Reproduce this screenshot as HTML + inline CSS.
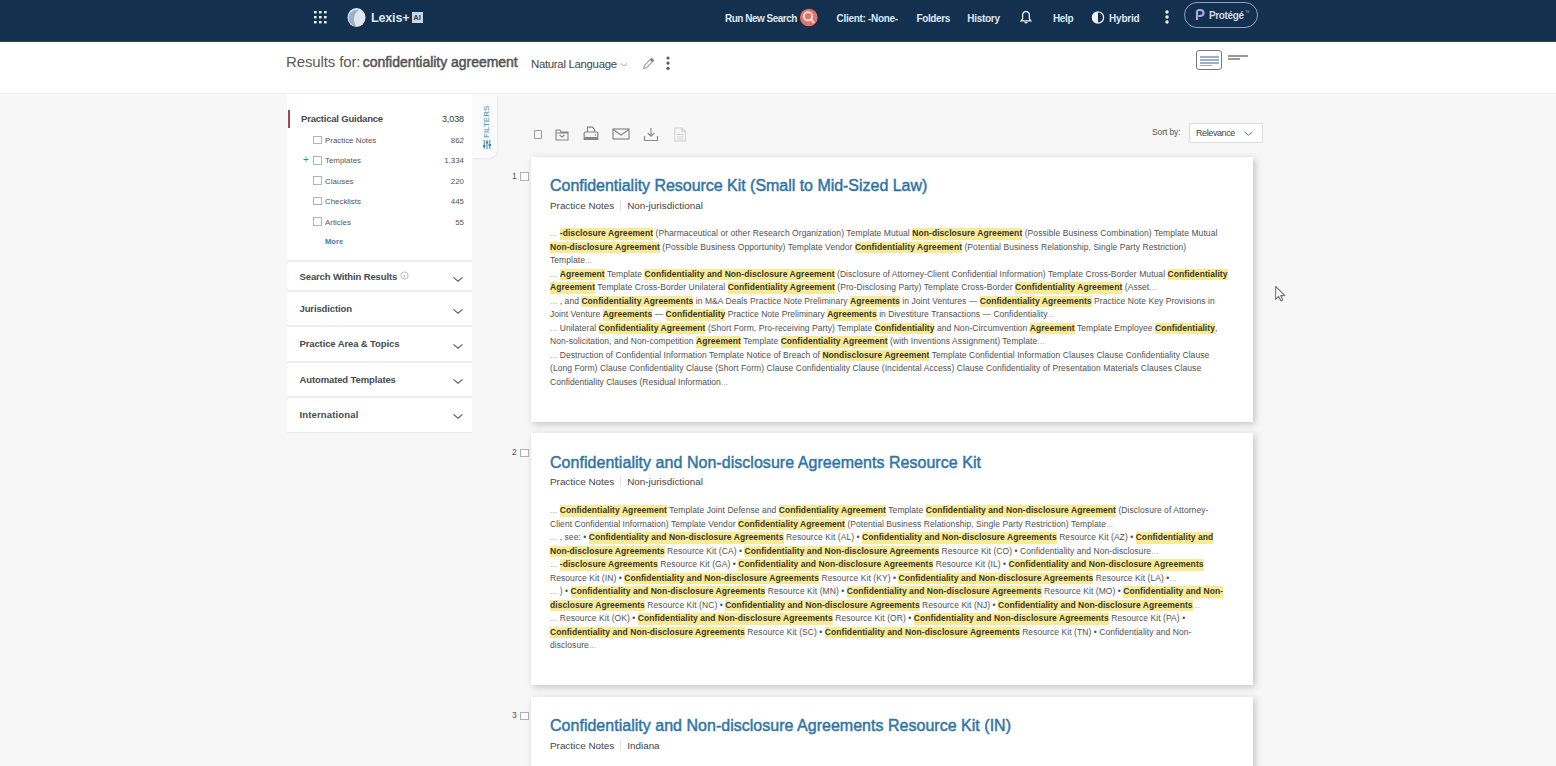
<!DOCTYPE html>
<html><head><meta charset="utf-8">
<style>
*{box-sizing:border-box;margin:0;padding:0}
html,body{width:1556px;height:766px;overflow:hidden;background:#f7f7f7;font-family:"Liberation Sans",sans-serif;position:relative}
.a{position:absolute;white-space:nowrap}
#nav{position:absolute;left:0;top:0;width:1556px;height:42px;background:#13304f;border-bottom:1px solid #3a4654;z-index:2}
.nv{position:absolute;top:12px;font-size:10px;line-height:14px;color:#dde7f2;font-weight:bold;letter-spacing:-0.2px}
#hdr{position:absolute;left:0;top:41px;width:1556px;height:53px;background:#fff}
#side{position:absolute;left:287px;top:94px;width:185px;height:339px;background:#fff}
.sec{position:absolute;left:0;width:185px;border-top:2px solid #eeeeee}
.st{position:absolute;left:12.5px;font-size:9.5px;font-weight:bold;color:#45494e;letter-spacing:-0.12px}
.chev{position:absolute;left:165px;width:7px;height:7px;border-right:1.2px solid #555;border-bottom:1.2px solid #555;transform:rotate(45deg)}
.row{position:absolute;left:26px;font-size:7.9px;color:#555;line-height:10px}
.cb{position:absolute;width:8.5px;height:8.5px;border:1px solid #b4b4b4;background:#fff}
.cnt{position:absolute;right:8px;font-size:7.9px;color:#555;line-height:10px;text-align:right}
.card{position:absolute;left:531px;width:721.6px;background:#fff;box-shadow:2px 2px 7px rgba(0,0,0,0.22)}
.ttl{position:absolute;left:19px;font-size:16px;font-weight:normal;color:#2f74a6;letter-spacing:-0.03px;line-height:18px;transform:scaleY(1.07);transform-origin:0 0;-webkit-text-stroke:0.45px #2f74a6}
.meta{position:absolute;left:19px;font-size:9.9px;color:#444;line-height:12px}
.meta i{display:inline-block;width:1px;height:11px;background:#e2e2e2;margin:0 6px;vertical-align:-2px}
.sn{position:absolute;left:19px;font-size:8.5px;color:#505050;line-height:13.55px}
.sn div{white-space:nowrap;height:13.55px}
.sn i.el{font-style:normal;color:#a8a8a8}
.sn b{background:#f8eb98;color:#3a3626;font-weight:bold;padding:0 0 1.5px}
.num{position:absolute;left:512px;font-size:8.5px;color:#555;line-height:10px}
.rcb{position:absolute;left:520px;width:8.5px;height:8.5px;border:1px solid #b0b0b0;background:#fff}
</style></head><body>
<div id="nav">
  <!-- grid icon -->
  <svg class="a" style="left:313px;top:10px" width="15" height="14" viewBox="0 0 15 14">
    <g fill="#e8eef6">
      <rect x="1" y="1" width="2.6" height="2.4"/><rect x="6" y="1" width="2.6" height="2.4"/><rect x="11" y="1" width="2.6" height="2.4"/>
      <rect x="1" y="6" width="2.6" height="2.4"/><rect x="6" y="6" width="2.6" height="2.4"/><rect x="11" y="6" width="2.6" height="2.4"/>
      <rect x="1" y="11" width="2.6" height="2.4"/><rect x="6" y="11" width="2.6" height="2.4"/><rect x="11" y="11" width="2.6" height="2.4"/>
    </g>
  </svg>
  <!-- logo -->
  <svg class="a" style="left:346px;top:7px" width="22" height="21" viewBox="0 0 22 21">
    <ellipse cx="10.5" cy="10.5" rx="9" ry="9.6" fill="#dfe6ef"/>
    <path d="M4 6 Q8 2 13 3 Q8 6 8 12 Q8 17 11 20 Q5 19 3 14 Q2 9 4 6Z" fill="#9fb0c4"/>
  </svg>
  <div class="a" style="left:371px;top:10px;font-size:12.6px;line-height:16px;color:#dce5f0;letter-spacing:-0.2px;font-weight:bold">Lexis+</div>
  <div class="a" style="left:411.5px;top:12px;width:11px;height:11px;background:#ccd5e3;color:#2a3d5a;font-size:7.5px;font-weight:bold;line-height:11px;text-align:center">AI</div>
  <div class="nv" style="left:725px;letter-spacing:-0.5px">Run New Search</div>
  <svg class="a" style="left:799px;top:7px" width="20" height="21" viewBox="0 0 20 21">
    <circle cx="9.8" cy="10.5" r="8.8" fill="#e3746d"/>
    <circle cx="9" cy="9.3" r="4.2" fill="none" stroke="#fbe3e0" stroke-width="1.8"/>
    <line x1="12" y1="12.5" x2="14.6" y2="15.3" stroke="#fbe3e0" stroke-width="1.9" stroke-linecap="round"/>
  </svg>
  <div class="nv" style="left:836.5px;letter-spacing:-0.3px">Client: -None-</div>
  <div class="nv" style="left:916.5px;letter-spacing:-0.4px">Folders</div>
  <div class="nv" style="left:967.3px;letter-spacing:-0.3px">History</div>
  <svg class="a" style="left:1020px;top:10px" width="12" height="14" viewBox="0 0 12 14">
    <path d="M6 1.5 C3.5 1.5 2.6 3.5 2.6 5.5 L2.6 9 L1.2 10.8 L10.8 10.8 L9.4 9 L9.4 5.5 C9.4 3.5 8.5 1.5 6 1.5Z" fill="none" stroke="#e9eef5" stroke-width="1.3"/>
    <path d="M4.6 12 Q6 13.6 7.4 12" fill="none" stroke="#e9eef5" stroke-width="1.2"/>
  </svg>
  <div class="nv" style="left:1053px;letter-spacing:-0.35px">Help</div>
  <svg class="a" style="left:1091px;top:11px" width="14" height="13" viewBox="0 0 14 13">
    <circle cx="7" cy="6.5" r="5.6" fill="none" stroke="#eef2f7" stroke-width="1.3"/>
    <path d="M7 0.9 A5.6 5.6 0 0 0 7 12.1Z" fill="#eef2f7"/>
  </svg>
  <div class="nv" style="left:1109px">Hybrid</div>
  <svg class="a" style="left:1164px;top:9px" width="6" height="16" viewBox="0 0 6 16">
    <circle cx="3" cy="3" r="1.7" fill="#eef2f7"/><circle cx="3" cy="8" r="1.7" fill="#eef2f7"/><circle cx="3" cy="13" r="1.7" fill="#eef2f7"/>
  </svg>
  <div class="a" style="left:1184px;top:2px;width:74px;height:26px;border:1.9px solid #8e9fc8;border-radius:13px"></div>
  <svg class="a" style="left:1195px;top:9px" width="10" height="12" viewBox="0 0 10 12">
    <path d="M2 11 L2 3 Q2 1 4.5 1 Q8.5 1 8.5 4 Q8.5 7 4.5 7 L3.5 7" fill="none" stroke="#b1a6ec" stroke-width="2.2"/>
  </svg>
  <div class="nv" style="left:1209px;top:9px;letter-spacing:-0.35px;color:#cfdbe8">Protégé</div>
  <div class="a" style="left:1245px;top:10px;font-size:3px;color:#aab;line-height:4px">TM</div>
</div>

<div id="hdr">
  <div class="a" style="left:286px;top:11.6px;font-size:15px;line-height:18px;color:#595959;letter-spacing:-0.12px">Results for: <b style="color:#555;font-size:14px;font-weight:normal;-webkit-text-stroke:0.5px #555;letter-spacing:-0.03px;margin-left:-1.7px">confidentiality agreement</b></div>
  <div class="a" style="left:531px;top:15.5px;font-size:11.4px;line-height:14px;color:#444;letter-spacing:-0.3px">Natural Language</div>
  <svg class="a" style="left:619px;top:20.5px" width="10" height="6" viewBox="0 0 10 6"><path d="M2 1.5 L5 4 L8 1.5" fill="none" stroke="#aaa" stroke-width="1"/></svg>
  <svg class="a" style="left:641px;top:15px" width="15" height="15" viewBox="0 0 15 15">
    <path d="M2.5 12.5 L3.3 9.5 L10.5 2.3 L12.7 4.5 L5.5 11.7 Z" fill="none" stroke="#a0a0a0" stroke-width="1.1"/><path d="M10.5 2.3 L12.7 4.5 L11.2 6 L9 3.8 Z" fill="#777"/>
  </svg>
  <svg class="a" style="left:665px;top:14px" width="6" height="16" viewBox="0 0 6 16">
    <circle cx="3" cy="3" r="1.6" fill="#5a5a5a"/><circle cx="3" cy="8.1" r="1.6" fill="#5a5a5a"/><circle cx="3" cy="13.3" r="1.6" fill="#5a5a5a"/>
  </svg>
  <!-- view toggles -->
  <div class="a" style="left:1196px;top:9px;width:26px;height:20px;border:1.5px solid #7b7b7b;border-radius:3px;background:#fff"></div>
  <div class="a" style="left:1200px;top:15px;width:19px;height:2px;background:#9db1cf"></div>
  <div class="a" style="left:1200px;top:18px;width:19px;height:2px;background:#9db1cf"></div>
  <div class="a" style="left:1200px;top:21px;width:19px;height:2px;background:#9db1cf"></div>
  <div class="a" style="left:1200px;top:23.5px;width:12px;height:1px;background:#9aa"></div>
  <div class="a" style="left:1228px;top:14px;width:20px;height:1.6px;background:#999"></div>
  <div class="a" style="left:1228px;top:17px;width:12px;height:1.6px;background:#999"></div>
</div>

<div id="side">
  <div class="a" style="left:0.5px;top:16px;width:2.5px;height:17.5px;background:#a5434b"></div>
  <div class="st" style="left:14px;top:19px;line-height:11px;letter-spacing:-0.2px">Practical Guidance</div>
  <div class="cnt" style="top:20px;font-size:9px;line-height:11px;color:#3a3a3a;letter-spacing:-0.1px">3,038</div>
  <div class="cb" style="left:26px;top:41.5px"></div><div class="row" style="left:38px;top:42px">Practice Notes</div><div class="cnt" style="top:42px">862</div>
  <div class="a" style="left:16px;top:61px;font-size:10px;line-height:10px;color:#3d8a9a">+</div>
  <div class="cb" style="left:26px;top:62px"></div><div class="row" style="left:38px;top:62px">Templates</div><div class="cnt" style="top:62px">1,334</div>
  <div class="cb" style="left:26px;top:82px"></div><div class="row" style="left:38px;top:83px">Clauses</div><div class="cnt" style="top:83px">220</div>
  <div class="cb" style="left:26px;top:102.5px"></div><div class="row" style="left:38px;top:103px">Checklists</div><div class="cnt" style="top:103px">445</div>
  <div class="cb" style="left:26px;top:123px"></div><div class="row" style="left:38px;top:124px">Articles</div><div class="cnt" style="top:124px">55</div>
  <div class="a" style="left:38px;top:143px;font-size:7.6px;font-weight:bold;color:#3f7fae;line-height:10px">More</div>
  <div class="sec" style="top:166px;height:30px"><div class="st" style="top:8.5px;line-height:11px">Search Within Results</div>
    <svg class="a" style="left:113px;top:8.5px" width="9" height="9" viewBox="0 0 9 9"><circle cx="4.5" cy="4.5" r="3.6" fill="none" stroke="#aaa" stroke-width="0.8"/><line x1="4.5" y1="3.8" x2="4.5" y2="6.4" stroke="#aaa" stroke-width="0.8"/></svg>
    <svg class="a" style="left:165px;top:13.5px" width="12" height="7" viewBox="0 0 12 7"><path d="M1.5 1.3 L6 5.2 L10.5 1.3" fill="none" stroke="#5a5a5a" stroke-width="1.05"/></svg></div>
  <div class="sec" style="top:196px;height:35px"><div class="st" style="top:10.5px;line-height:11px">Jurisdiction</div><svg class="a" style="left:165px;top:16px" width="12" height="7" viewBox="0 0 12 7"><path d="M1.5 1.3 L6 5.2 L10.5 1.3" fill="none" stroke="#5a5a5a" stroke-width="1.05"/></svg></div>
  <div class="sec" style="top:231px;height:36px"><div class="st" style="top:11px;line-height:11px">Practice Area &amp; Topics</div><svg class="a" style="left:165px;top:16px" width="12" height="7" viewBox="0 0 12 7"><path d="M1.5 1.3 L6 5.2 L10.5 1.3" fill="none" stroke="#5a5a5a" stroke-width="1.05"/></svg></div>
  <div class="sec" style="top:267px;height:35px"><div class="st" style="top:11px;line-height:11px">Automated Templates</div><svg class="a" style="left:165px;top:15px" width="12" height="7" viewBox="0 0 12 7"><path d="M1.5 1.3 L6 5.2 L10.5 1.3" fill="none" stroke="#5a5a5a" stroke-width="1.05"/></svg></div>
  <div class="sec" style="top:302px;height:37px;border-bottom:1px solid #ececec"><div class="st" style="top:11px;line-height:11px;letter-spacing:0.15px">International</div><svg class="a" style="left:165px;top:15px" width="12" height="7" viewBox="0 0 12 7"><path d="M1.5 1.3 L6 5.2 L10.5 1.3" fill="none" stroke="#5a5a5a" stroke-width="1.05"/></svg></div>
</div>
<div class="a" style="left:472px;top:94px;width:25px;height:64px;background:#fbfbfb;border-bottom-right-radius:8px;box-shadow:1px 1px 2px rgba(0,0,0,0.05)"></div>
<div class="a" style="left:480.5px;top:138px;transform-origin:0 0;transform:rotate(-90deg);font-size:8px;line-height:12px;color:#3a87b4;letter-spacing:0px">FILTERS</div>
<svg class="a" style="left:483px;top:140px" width="8" height="9" viewBox="0 0 8 9"><g stroke="#3a87b4" stroke-width="1"><line y1="0" x1="1.2" y2="9" x2="1.2"/><line y1="0" x1="4" y2="9" x2="4"/><line y1="0" x1="6.8" y2="9" x2="6.8"/></g><g fill="#3a87b4"><rect y="5" x="0" height="2" width="2.4"/><rect y="1.5" x="2.8" height="2" width="2.4"/><rect y="4" x="5.6" height="2" width="2.4"/></g></svg>
<div class="a" style="left:0;top:93px;width:1556px;height:1px;background:#efefef"></div>

<!-- results toolbar -->
<div class="a" style="left:534px;top:129.5px;width:8px;height:9px;border:1.2px solid #999;border-radius:1px"></div>
<svg class="a" style="left:555px;top:127px" width="14" height="14" viewBox="0 0 14 14">
  <path d="M1 3 L1 13 L13 13 L13 5 L6 5 L5 3 Z M1.5 6 L13 6" fill="none" stroke="#868686" stroke-width="1.1"/>
  <path d="M4.5 8 L7 10 L9.5 8" fill="none" stroke="#868686" stroke-width="1.1"/>
</svg>
<svg class="a" style="left:583px;top:126px" width="16" height="15" viewBox="0 0 16 15">
  <path d="M4.5 6 L4.5 1.2 L9.5 1.2 L11.5 3.5 L11.5 6" fill="none" stroke="#868686" stroke-width="1.2"/>
  <path d="M1.2 13.5 L1.2 7 Q1.2 6 2.2 6 L13.8 6 Q14.8 6 14.8 7 L14.8 13.5 Z" fill="none" stroke="#868686" stroke-width="1.2"/>
  <path d="M1.2 12 L14.8 12" stroke="#868686" stroke-width="2"/>
  <circle cx="12.5" cy="9" r="0.8" fill="#868686"/>
</svg>
<svg class="a" style="left:612px;top:128px" width="18" height="12" viewBox="0 0 18 12">
  <rect x="1" y="1" width="16" height="10" fill="none" stroke="#868686" stroke-width="1.2"/>
  <path d="M1 1.5 L9 7 L17 1.5" fill="none" stroke="#868686" stroke-width="1.2"/>
</svg>
<svg class="a" style="left:643px;top:127px" width="16" height="15" viewBox="0 0 16 15">
  <path d="M8 1 L8 9 M4.8 6 L8 9.2 L11.2 6" fill="none" stroke="#8a8a8a" stroke-width="1.2"/>
  <path d="M1.5 9 L1.5 13.5 L14.5 13.5 L14.5 9" fill="none" stroke="#8a8a8a" stroke-width="1.2"/>
</svg>
<svg class="a" style="left:673px;top:127px" width="14" height="15" viewBox="0 0 14 15">
  <path d="M1.8 1 L9 1 L12.5 4.5 L12.5 14 L1.8 14 Z M9 1 L9 4.5 L12.5 4.5 M4 7.5 L10.5 7.5 M4 10 L10.5 10 M4 12 L10.5 12" fill="none" stroke="#d2d2d2" stroke-width="1.1"/>
</svg>
<div class="a" style="left:1152px;top:126.7px;font-size:8.5px;line-height:11px;color:#555;letter-spacing:-0.1px">Sort by:</div>
<div class="a" style="left:1189px;top:123px;width:74px;height:20px;border:1px solid #dcdcdc;background:#fff"></div>
<div class="a" style="left:1196px;top:127.7px;font-size:9px;line-height:11px;color:#444;letter-spacing:-0.4px">Relevance</div>
<svg class="a" style="left:1243px;top:130px" width="11" height="7" viewBox="0 0 11 7"><path d="M1.5 1.8 L5.5 5.2 L9.5 1.8" fill="none" stroke="#777" stroke-width="1"/></svg>

<div class="num" style="top:171px">1</div><div class="rcb" style="top:172px"></div>
<div class="card" style="top:157px;height:265px">
  <div class="ttl" style="top:19.1px">Confidentiality Resource Kit (Small to Mid-Sized Law)</div>
  <div class="meta" style="top:43px">Practice Notes<i></i>Non-jurisdictional</div>
  <div class="sn" style="top:70px">
<div id="a0" style="letter-spacing:0.072px"><i class="el">...</i> <b>-disclosure Agreement</b> (Pharmaceutical or other Research Organization) Template Mutual <b>Non-disclosure Agreement</b> (Possible Business Combination) Template Mutual</div>
<div id="a1" style="letter-spacing:0.067px"><b>Non-disclosure Agreement</b> (Possible Business Opportunity) Template Vendor <b>Confidentiality Agreement</b> (Potential Business Relationship, Single Party Restriction)</div>
<div id="a2" style="letter-spacing:0.060px">Template<i class="el">...</i></div>
<div id="a3" style="letter-spacing:0.066px"><i class="el">...</i> <b>Agreement</b> Template <b>Confidentiality and Non-disclosure Agreement</b> (Disclosure of Attorney-Client Confidential Information) Template Cross-Border Mutual <b>Confidentiality</b></div>
<div id="a4" style="letter-spacing:0.070px"><b>Agreement</b> Template Cross-Border Unilateral <b>Confidentiality Agreement</b> (Pro-Disclosing Party) Template Cross-Border <b>Confidentiality Agreement</b> (Asset<i class="el">...</i></div>
<div id="a5" style="letter-spacing:0.067px"><i class="el">...</i> , and <b>Confidentiality Agreements</b> in M&amp;A Deals Practice Note Preliminary <b>Agreements</b> in Joint Ventures — <b>Confidentiality Agreements</b> Practice Note Key Provisions in</div>
<div id="a6" style="letter-spacing:0.045px">Joint Venture <b>Agreements</b> — <b>Confidentiality</b> Practice Note Preliminary <b>Agreements</b> in Divestiture Transactions — Confidentiality<i class="el">...</i></div>
<div id="a7" style="letter-spacing:0.057px"><i class="el">...</i> Unilateral <b>Confidentiality Agreement</b> (Short Form, Pro-receiving Party) Template <b>Confidentiality</b> and Non-Circumvention <b>Agreement</b> Template Employee <b>Confidentiality</b>,</div>
<div id="a8" style="letter-spacing:0.062px">Non-solicitation, and Non-competition <b>Agreement</b> Template <b>Confidentiality Agreement</b> (with Inventions Assignment) Template<i class="el">...</i></div>
<div id="a9" style="letter-spacing:0.064px"><i class="el">...</i> Destruction of Confidential Information Template Notice of Breach of <b>Nondisclosure Agreement</b> Template Confidential Information Clauses Clause Confidentiality Clause</div>
<div id="a10" style="letter-spacing:0.063px">(Long Form) Clause Confidentiality Clause (Short Form) Clause Confidentiality Clause (Incidental Access) Clause Confidentiality of Presentation Materials Clauses Clause</div>
<div id="a11" style="letter-spacing:0.027px">Confidentiality Clauses (Residual Information<i class="el">...</i></div>
  </div>
</div>

<div class="num" style="top:447px">2</div><div class="rcb" style="top:448.5px"></div>
<div class="card" style="top:433px;height:252px">
  <div class="ttl" style="top:20.1px;letter-spacing:0.04px">Confidentiality and Non-disclosure Agreements Resource Kit</div>
  <div class="meta" style="top:43px">Practice Notes<i></i>Non-jurisdictional</div>
  <div class="sn" style="top:71px">
<div id="b0" style="letter-spacing:0.069px"><i class="el">...</i> <b>Confidentiality Agreement</b> Template Joint Defense and <b>Confidentiality Agreement</b> Template <b>Confidentiality and Non-disclosure Agreement</b> (Disclosure of Attorney-</div>
<div id="b1" style="letter-spacing:0.060px">Client Confidential Information) Template Vendor <b>Confidentiality Agreement</b> (Potential Business Relationship, Single Party Restriction) Template<i class="el">...</i></div>
<div id="b2" style="letter-spacing:0.063px"><i class="el">...</i> , see: • <b>Confidentiality and Non-disclosure Agreements</b> Resource Kit (AL) • <b>Confidentiality and Non-disclosure Agreements</b> Resource Kit (AZ) • <b>Confidentiality and</b></div>
<div id="b3" style="letter-spacing:0.062px"><b>Non-disclosure Agreements</b> Resource Kit (CA) • <b>Confidentiality and Non-disclosure Agreements</b> Resource Kit (CO) • Confidentiality and Non-disclosure<i class="el">...</i></div>
<div id="b4" style="letter-spacing:0.069px"><i class="el">...</i> <b>-disclosure Agreements</b> Resource Kit (GA) • <b>Confidentiality and Non-disclosure Agreements</b> Resource Kit (IL) • <b>Confidentiality and Non-disclosure Agreements</b></div>
<div id="b5" style="letter-spacing:0.065px">Resource Kit (IN) • <b>Confidentiality and Non-disclosure Agreements</b> Resource Kit (KY) • <b>Confidentiality and Non-disclosure Agreements</b> Resource Kit (LA) •<i class="el">...</i></div>
<div id="b6" style="letter-spacing:0.065px"><i class="el">...</i> ) • <b>Confidentiality and Non-disclosure Agreements</b> Resource Kit (MN) • <b>Confidentiality and Non-disclosure Agreements</b> Resource Kit (MO) • <b>Confidentiality and Non-</b></div>
<div id="b7" style="letter-spacing:0.058px"><b>disclosure Agreements</b> Resource Kit (NC) • <b>Confidentiality and Non-disclosure Agreements</b> Resource Kit (NJ) • <b>Confidentiality and Non-disclosure Agreements</b><i class="el">...</i></div>
<div id="b8" style="letter-spacing:0.069px"><i class="el">...</i> Resource Kit (OK) • <b>Confidentiality and Non-disclosure Agreements</b> Resource Kit (OR) • <b>Confidentiality and Non-disclosure Agreements</b> Resource Kit (PA) •</div>
<div id="b9" style="letter-spacing:0.066px"><b>Confidentiality and Non-disclosure Agreements</b> Resource Kit (SC) • <b>Confidentiality and Non-disclosure Agreements</b> Resource Kit (TN) • Confidentiality and Non-</div>
<div id="b10" style="letter-spacing:0.060px">disclosure<i class="el">...</i></div>
  </div>
</div>

<div class="num" style="top:710px">3</div><div class="rcb" style="top:711.5px"></div>
<div class="card" style="top:697px;height:120px">
  <div class="ttl" style="top:19.2px;letter-spacing:0.02px">Confidentiality and Non-disclosure Agreements Resource Kit (IN)</div>
  <div class="meta" style="top:43px">Practice Notes<i></i>Indiana</div>
</div>

<svg class="a" style="left:1274px;top:284.5px" width="14" height="18" viewBox="0 0 14 18"><path d="M1.6 1.5 L1.6 14.3 L4.6 11.4 L6.8 15.8 L8.8 14.9 L6.7 10.6 L10.9 10.6 Z" fill="#fbfbfb" stroke="#777" stroke-width="1.1" stroke-linejoin="round"/></svg>
</body></html>
